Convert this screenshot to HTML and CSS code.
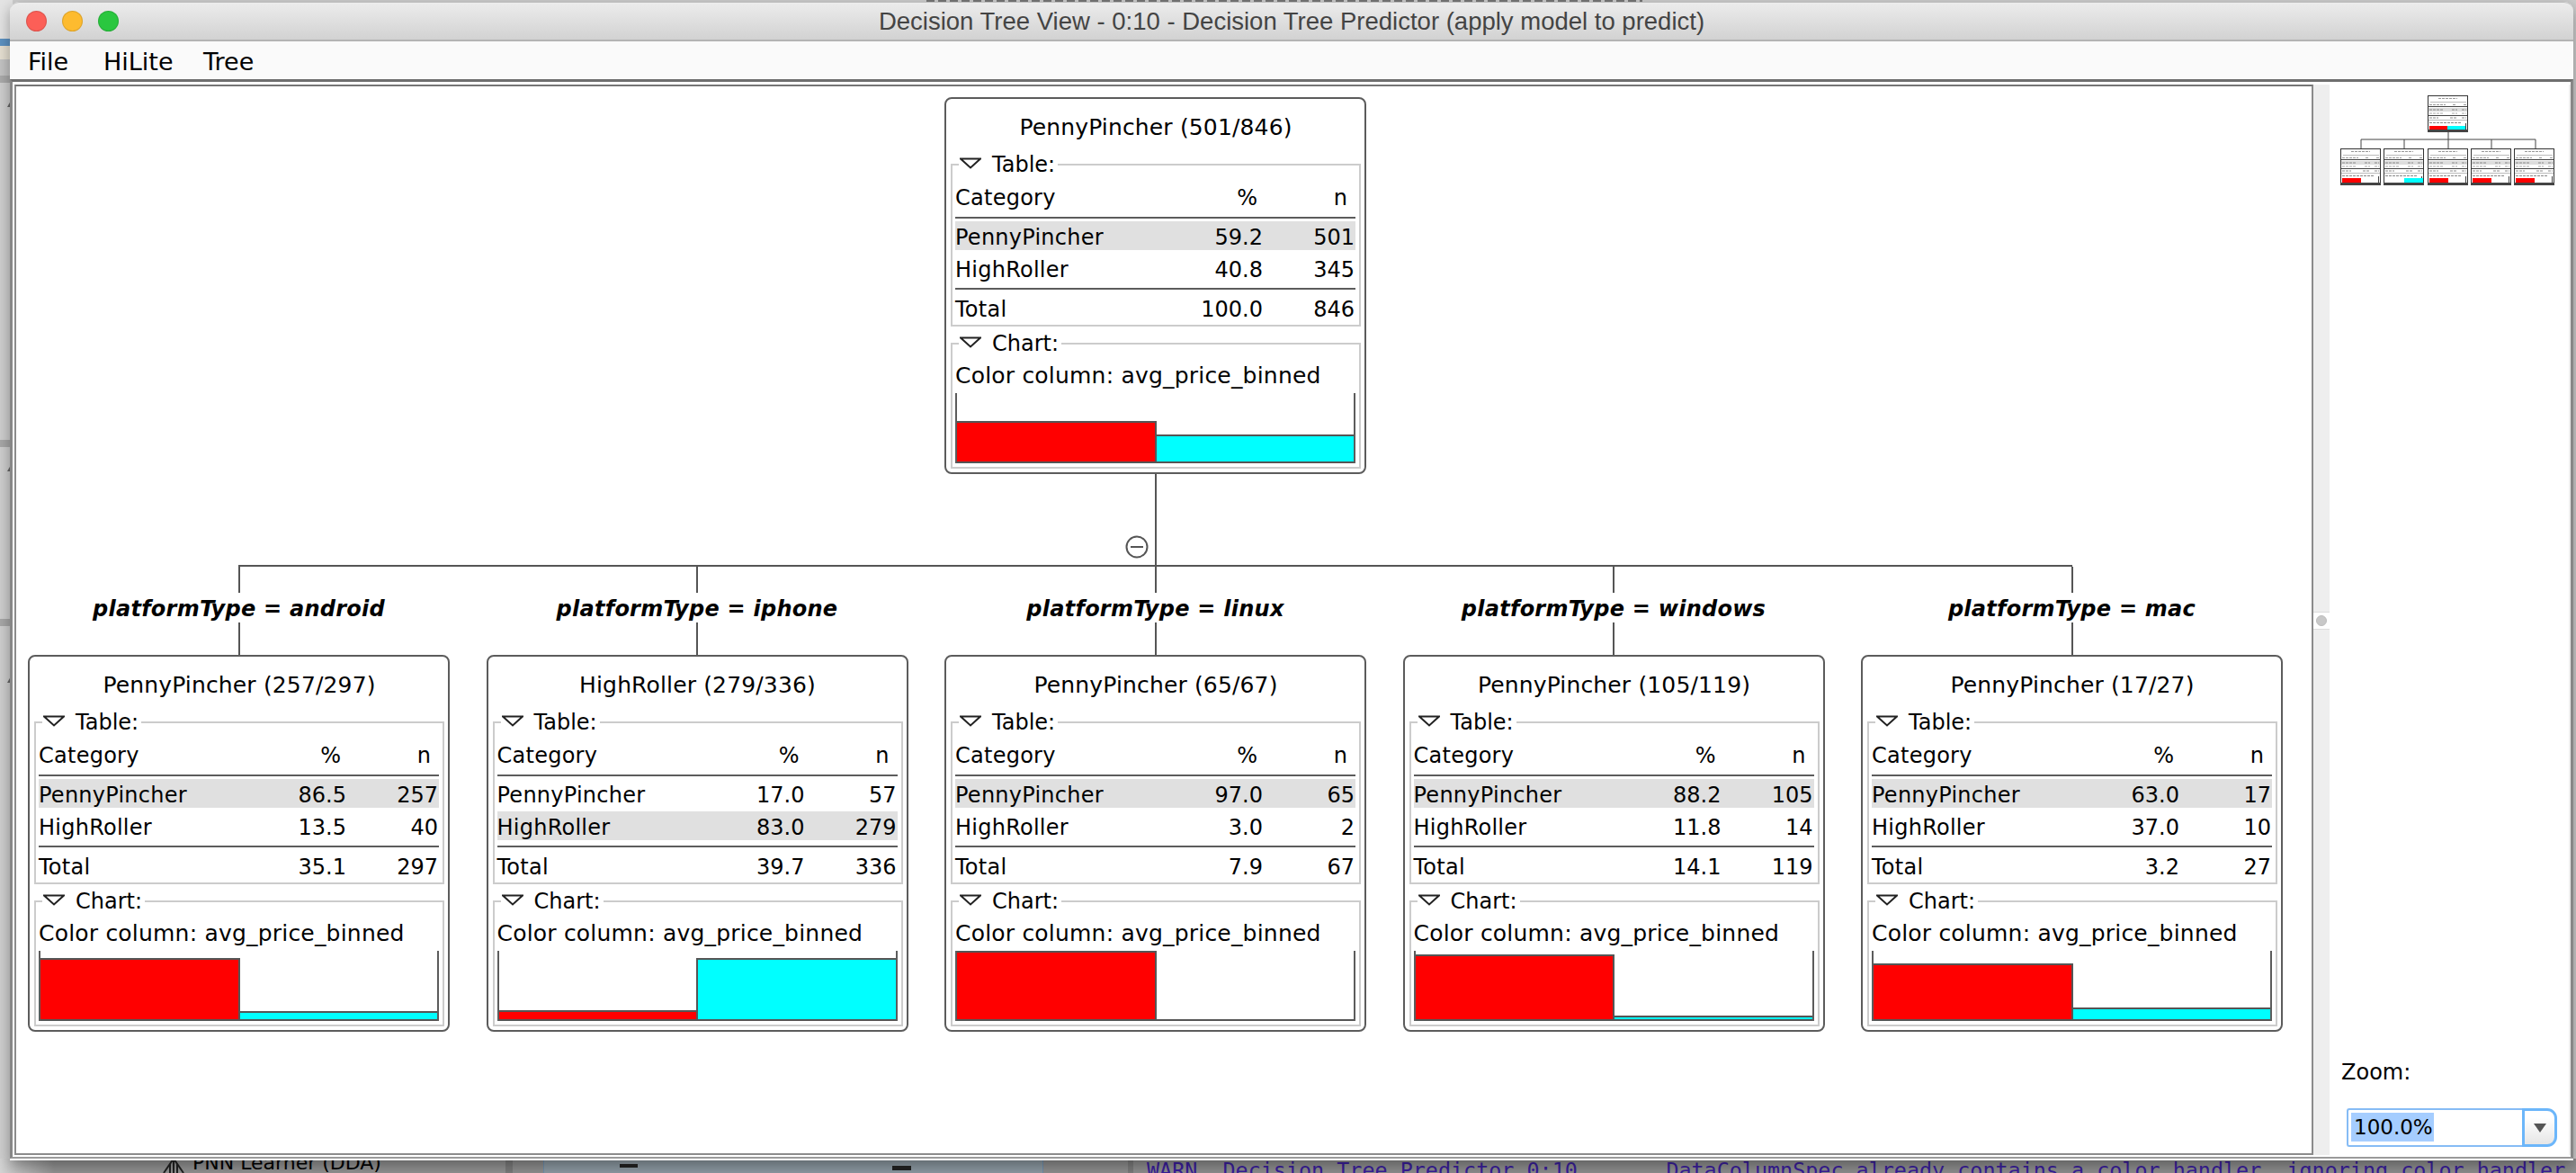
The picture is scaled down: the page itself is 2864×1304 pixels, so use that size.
FILE: index.html
```html
<!doctype html>
<html lang="en">

<head>
	<meta charset="UTF-8" />
	<meta name="viewport" content="width=device-width, initial-scale=1.0" />
	<title>Decision Tree View</title>
	<link rel="stylesheet" href="styles.css">
</head>

<body>
	<!-- what shows of the desktop behind the window -->
	<div class="top-strip"></div>
	<div class="left-strip">
		<div class="strip-tab"></div>
		<div class="strip-blue"></div>
		<div class="strip-cream"></div>
		<div class="strip-tab strip-tab-short"></div>
		<div class="strip-panel strip-panel-one"></div>
		<div class="strip-panel strip-panel-two"></div>
		<div class="strip-panel strip-panel-three"></div>
	</div>
	<div class="bottom-strip">
		<div class="bottom-repo">
			<svg class="repo-icon" width="30" height="16" viewBox="0 0 30 16">
				<path d="M15 0V16M15 0L4 16M15 0L26 16M11 6V16M19 6V16" fill="none" stroke="#222" stroke-width="2" />
			</svg>
			<span class="repo-label">PNN Learner (DDA)</span>
		</div>
		<div class="bottom-sep"></div>
		<div class="bottom-editor">
			<span class="editor-mark editor-mark-one"></span>
			<span class="editor-mark editor-mark-two"></span>
		</div>
		<div class="bottom-sep bottom-sep-wide"></div>
		<div class="bottom-console">WARN  Decision Tree Predictor 0:10       DataColumnSpec already contains a color handler, ignoring color handler</div>
	</div>

	<div class="window">
		<div class="titlebar">
			<div class="lights">
				<span class="light light-red"></span>
				<span class="light light-amber"></span>
				<span class="light light-green"></span>
			</div>
			<div class="window-title">Decision Tree View - 0:10 - Decision Tree Predictor (apply model to predict)</div>
		</div>

		<div class="menubar">
			<span class="menu-item">File</span>
			<span class="menu-item">HiLite</span>
			<span class="menu-item">Tree</span>
		</div>

		<div class="main">
			<div class="canvas">
				<div class="tree">
					<div class="root">
						<div class="node">
							<div class="node-title">PennyPincher (501/846)</div>
							<fieldset class="group group-table">
								<legend class="group-legend"><svg class="caret" width="24" height="13" viewBox="0 0 24 13"><path d="M1 1.5H23L12 11.5Z" fill="#fff" stroke="#222" stroke-width="2" /></svg>Table:</legend>
								<div class="row row-head"><span>Category</span><span>%</span><span>n</span></div>
								<div class="row row-on"><span>PennyPincher</span><span>59.2</span><span>501</span></div>
								<div class="row"><span>HighRoller</span><span>40.8</span><span>345</span></div>
								<div class="row row-total"><span>Total</span><span>100.0</span><span>846</span></div>
							</fieldset>
							<fieldset class="group group-chart">
								<legend class="group-legend"><svg class="caret" width="24" height="13" viewBox="0 0 24 13"><path d="M1 1.5H23L12 11.5Z" fill="#fff" stroke="#222" stroke-width="2" /></svg>Chart:</legend>
								<div class="color-col">Color column: avg_price_binned</div>
								<div class="chart">
									<div class="bar-slot"><div class="bar bar-red" style="height: 47px"></div></div>
									<div class="bar-slot"><div class="bar bar-cyan" style="height: 32px"></div></div>
								</div>
							</fieldset>
						</div>
						<div class="stem">
							<svg class="collapse" width="26" height="26" viewBox="0 0 26 26"><circle cx="13" cy="13" r="11.5" fill="#fff" stroke="#555" stroke-width="2" /><path d="M6 13H20" stroke="#555" stroke-width="2" /></svg>
						</div>
					</div>
					<div class="bus"></div>
					<div class="branches">

						<div class="branch">
							<div class="stub stub-top"></div>
							<div class="rule">platformType = android</div>
							<div class="stub stub-bottom"></div>
							<div class="node">
								<div class="node-title">PennyPincher (257/297)</div>
								<fieldset class="group group-table">
									<legend class="group-legend"><svg class="caret" width="24" height="13" viewBox="0 0 24 13"><path d="M1 1.5H23L12 11.5Z" fill="#fff" stroke="#222" stroke-width="2" /></svg>Table:</legend>
									<div class="row row-head"><span>Category</span><span>%</span><span>n</span></div>
									<div class="row row-on"><span>PennyPincher</span><span>86.5</span><span>257</span></div>
									<div class="row"><span>HighRoller</span><span>13.5</span><span>40</span></div>
									<div class="row row-total"><span>Total</span><span>35.1</span><span>297</span></div>
								</fieldset>
								<fieldset class="group group-chart">
									<legend class="group-legend"><svg class="caret" width="24" height="13" viewBox="0 0 24 13"><path d="M1 1.5H23L12 11.5Z" fill="#fff" stroke="#222" stroke-width="2" /></svg>Chart:</legend>
									<div class="color-col">Color column: avg_price_binned</div>
									<div class="chart">
										<div class="bar-slot"><div class="bar bar-red" style="height: 70px"></div></div>
										<div class="bar-slot"><div class="bar bar-cyan" style="height: 11px"></div></div>
									</div>
								</fieldset>
							</div>
						</div>

						<div class="branch">
							<div class="stub stub-top"></div>
							<div class="rule">platformType = iphone</div>
							<div class="stub stub-bottom"></div>
							<div class="node">
								<div class="node-title">HighRoller (279/336)</div>
								<fieldset class="group group-table">
									<legend class="group-legend"><svg class="caret" width="24" height="13" viewBox="0 0 24 13"><path d="M1 1.5H23L12 11.5Z" fill="#fff" stroke="#222" stroke-width="2" /></svg>Table:</legend>
									<div class="row row-head"><span>Category</span><span>%</span><span>n</span></div>
									<div class="row"><span>PennyPincher</span><span>17.0</span><span>57</span></div>
									<div class="row row-on"><span>HighRoller</span><span>83.0</span><span>279</span></div>
									<div class="row row-total"><span>Total</span><span>39.7</span><span>336</span></div>
								</fieldset>
								<fieldset class="group group-chart">
									<legend class="group-legend"><svg class="caret" width="24" height="13" viewBox="0 0 24 13"><path d="M1 1.5H23L12 11.5Z" fill="#fff" stroke="#222" stroke-width="2" /></svg>Chart:</legend>
									<div class="color-col">Color column: avg_price_binned</div>
									<div class="chart">
										<div class="bar-slot"><div class="bar bar-red" style="height: 12px"></div></div>
										<div class="bar-slot"><div class="bar bar-cyan" style="height: 70px"></div></div>
									</div>
								</fieldset>
							</div>
						</div>

						<div class="branch">
							<div class="stub stub-top"></div>
							<div class="rule">platformType = linux</div>
							<div class="stub stub-bottom"></div>
							<div class="node">
								<div class="node-title">PennyPincher (65/67)</div>
								<fieldset class="group group-table">
									<legend class="group-legend"><svg class="caret" width="24" height="13" viewBox="0 0 24 13"><path d="M1 1.5H23L12 11.5Z" fill="#fff" stroke="#222" stroke-width="2" /></svg>Table:</legend>
									<div class="row row-head"><span>Category</span><span>%</span><span>n</span></div>
									<div class="row row-on"><span>PennyPincher</span><span>97.0</span><span>65</span></div>
									<div class="row"><span>HighRoller</span><span>3.0</span><span>2</span></div>
									<div class="row row-total"><span>Total</span><span>7.9</span><span>67</span></div>
								</fieldset>
								<fieldset class="group group-chart">
									<legend class="group-legend"><svg class="caret" width="24" height="13" viewBox="0 0 24 13"><path d="M1 1.5H23L12 11.5Z" fill="#fff" stroke="#222" stroke-width="2" /></svg>Chart:</legend>
									<div class="color-col">Color column: avg_price_binned</div>
									<div class="chart">
										<div class="bar-slot"><div class="bar bar-red" style="height: 78px"></div></div>
										<div class="bar-slot"><div class="bar bar-white" style="height: 2px"></div></div>
									</div>
								</fieldset>
							</div>
						</div>

						<div class="branch">
							<div class="stub stub-top"></div>
							<div class="rule">platformType = windows</div>
							<div class="stub stub-bottom"></div>
							<div class="node">
								<div class="node-title">PennyPincher (105/119)</div>
								<fieldset class="group group-table">
									<legend class="group-legend"><svg class="caret" width="24" height="13" viewBox="0 0 24 13"><path d="M1 1.5H23L12 11.5Z" fill="#fff" stroke="#222" stroke-width="2" /></svg>Table:</legend>
									<div class="row row-head"><span>Category</span><span>%</span><span>n</span></div>
									<div class="row row-on"><span>PennyPincher</span><span>88.2</span><span>105</span></div>
									<div class="row"><span>HighRoller</span><span>11.8</span><span>14</span></div>
									<div class="row row-total"><span>Total</span><span>14.1</span><span>119</span></div>
								</fieldset>
								<fieldset class="group group-chart">
									<legend class="group-legend"><svg class="caret" width="24" height="13" viewBox="0 0 24 13"><path d="M1 1.5H23L12 11.5Z" fill="#fff" stroke="#222" stroke-width="2" /></svg>Chart:</legend>
									<div class="color-col">Color column: avg_price_binned</div>
									<div class="chart">
										<div class="bar-slot"><div class="bar bar-red" style="height: 74px"></div></div>
										<div class="bar-slot"><div class="bar bar-cyan" style="height: 6px"></div></div>
									</div>
								</fieldset>
							</div>
						</div>

						<div class="branch">
							<div class="stub stub-top"></div>
							<div class="rule">platformType = mac</div>
							<div class="stub stub-bottom"></div>
							<div class="node">
								<div class="node-title">PennyPincher (17/27)</div>
								<fieldset class="group group-table">
									<legend class="group-legend"><svg class="caret" width="24" height="13" viewBox="0 0 24 13"><path d="M1 1.5H23L12 11.5Z" fill="#fff" stroke="#222" stroke-width="2" /></svg>Table:</legend>
									<div class="row row-head"><span>Category</span><span>%</span><span>n</span></div>
									<div class="row row-on"><span>PennyPincher</span><span>63.0</span><span>17</span></div>
									<div class="row"><span>HighRoller</span><span>37.0</span><span>10</span></div>
									<div class="row row-total"><span>Total</span><span>3.2</span><span>27</span></div>
								</fieldset>
								<fieldset class="group group-chart">
									<legend class="group-legend"><svg class="caret" width="24" height="13" viewBox="0 0 24 13"><path d="M1 1.5H23L12 11.5Z" fill="#fff" stroke="#222" stroke-width="2" /></svg>Chart:</legend>
									<div class="color-col">Color column: avg_price_binned</div>
									<div class="chart">
										<div class="bar-slot"><div class="bar bar-red" style="height: 64px"></div></div>
										<div class="bar-slot"><div class="bar bar-cyan" style="height: 15px"></div></div>
									</div>
								</fieldset>
							</div>
						</div>

					</div>
				</div>
			</div>

			<div class="split">
				<div class="split-handle"><span class="split-knob"></span></div>
			</div>

			<div class="side">
				<svg class="minimap" width="266" height="120" viewBox="0 0 266 120">
					<defs>
						<g id="mini-node">
							<rect x="0.5" y="0.5" width="44" height="40" fill="#fff" stroke="#333" />
							<path d="M12 3.5H33" stroke="#999" stroke-dasharray="3 1" />
							<path d="M3 7.5H43" stroke="#bbb" />
							<path d="M2 10.5H20M28 10.5H31M40 10.5H43" stroke="#999" stroke-dasharray="3 1" />
							<path d="M1 12.5H44" stroke="#444" />
							<rect x="1" y="14" width="43" height="4" fill="#ddd" />
							<path d="M2 16H18M27 16H33M38 16H43" stroke="#888" stroke-dasharray="3 1" />
							<path d="M2 20H18M27 20H33M38 20H43" stroke="#aaa" stroke-dasharray="3 1" />
							<path d="M1 22.5H44" stroke="#444" />
							<path d="M2 25H12M25 25H33M38 25H43" stroke="#888" stroke-dasharray="3 1" />
							<path d="M1 27.5H44" stroke="#bbb" />
							<path d="M2 30.5H38" stroke="#888" stroke-dasharray="3 1" />
							<path d="M42.5 31V38" stroke="#444" />
							<rect x="0" y="38" width="45" height="3" fill="#444" />
						</g>
					</defs>
					<path d="M132 53V61M35 61H229M35 61V71M83 61V71M132 61V71M180 61V71M229 61V71" fill="none" stroke="#444" />
					<use href="#mini-node" x="109" y="12" />
					<rect x="111" y="46" width="20" height="4" fill="#f00" />
					<rect x="131" y="46" width="20" height="4" fill="#0ff" />
					<use href="#mini-node" x="12" y="71" />
					<rect x="14" y="104" width="21" height="5" fill="#f00" />
					<use href="#mini-node" x="60" y="71" />
					<rect x="83" y="104" width="21" height="5" fill="#0ff" />
					<use href="#mini-node" x="109" y="71" />
					<rect x="111" y="104" width="21" height="5" fill="#f00" />
					<use href="#mini-node" x="157" y="71" />
					<rect x="159" y="104" width="21" height="5" fill="#f00" />
					<use href="#mini-node" x="205" y="71" />
					<rect x="207" y="104" width="21" height="5" fill="#f00" />
				</svg>
				<div class="zoom-label">Zoom:</div>
				<div class="combo">
					<div class="combo-field"><span class="combo-value">100.0%</span></div>
					<div class="combo-button"><span class="combo-arrow"></span></div>
				</div>
			</div>
		</div>
	</div>
</body>

</html>
```

FILE: styles.css
```css
* {
	box-sizing: border-box;
}

html,
body {
	margin: 0;
	height: 1304px;
	overflow: hidden;
}

body {
	position: relative;
	background: #cdcdcd;
	font-family: "DejaVu Sans", Verdana, sans-serif;
	font-size: 24px;
	color: #000;
}

/* desktop behind the window */
.top-strip {
	position: absolute;
	left: 1030px;
	top: 0;
	width: 796px;
	height: 2px;
	background: repeating-linear-gradient(90deg, #777 0 9px, #ccc 9px 13px);
}

.left-strip {
	position: absolute;
	left: 0;
	top: 0;
	width: 14px;
	height: 1304px;
	display: flex;
	flex-direction: column;
}

.strip-tab {
	height: 43px;
	background: #e4e4e4;
}

.strip-tab-short {
	height: 18px;
	background: #c4c4c4;
	border-bottom: 8px solid #ababab;
	box-sizing: content-box;
}

.strip-blue {
	height: 8px;
	background: #5d92c2;
}

.strip-cream {
	height: 15px;
	background: #e6e0d2;
}

.strip-panel {
	position: relative;
	background: #cfcfcf;
	border-bottom: 8px solid #a8a8a8;
}

.strip-panel::after {
	content: "";
	position: absolute;
	left: 8px;
	top: 20px;
	border-left: 4px solid transparent;
	border-bottom: 7px solid #666;
}

.strip-panel-one {
	height: 405px;
}

.strip-panel-two {
	height: 199px;
}

.strip-panel-three {
	height: 600px;
	border-bottom: none;
}

.strip-panel-three::after {
	top: 56px;
}

.bottom-strip {
	position: absolute;
	left: 0;
	bottom: 0;
	width: 2864px;
	height: 16px;
	display: flex;
	overflow: hidden;
	background: #8f8f8f;
	color: #000;
}

.bottom-repo {
	flex: none;
	display: flex;
	width: 562px;
	padding-left: 178px;
	gap: 6px;
	background: linear-gradient(90deg, #d4d4d4, #939393 60px);
}

.repo-icon {
	flex: none;
}

.repo-label {
	font-family: "DejaVu Sans", sans-serif;
	font-size: 22px;
	line-height: 22px;
	margin-top: -6px;
	white-space: nowrap;
}

.bottom-sep {
	flex: none;
	width: 8px;
	background: #7c7c7c;
}

.bottom-sep-wide {
	width: 6px;
}

.bottom-editor {
	flex: none;
	position: relative;
	width: 556px;
	margin-left: 34px;
	margin-right: 94px;
	background: #8d9aa3;
	border-left: 1px solid #6f8fae;
	border-right: 1px solid #6f8fae;
}

.editor-mark {
	position: absolute;
	background: #222;
	height: 4px;
}

.editor-mark-one {
	left: 84px;
	top: 6px;
	width: 20px;
}

.editor-mark-two {
	left: 387px;
	top: 8px;
	width: 21px;
	height: 5px;
}

.bottom-console {
	flex: none;
	margin-left: 15px;
	font-family: "DejaVu Sans Mono", "Liberation Mono", monospace;
	font-size: 23.4px;
	line-height: 26px;
	color: #3a1e9c;
	white-space: pre;
}

/* window */
.window {
	position: absolute;
	left: 11px;
	top: 2px;
	width: 2850px;
	height: 1288px;
	display: flex;
	flex-direction: column;
	padding-bottom: 2px;
	background: #fff;
	border-radius: 10px 10px 0 0;
	box-shadow: 0 6px 16px rgba(0, 0, 0, 0.35);
}

.titlebar {
	position: relative;
	flex: none;
	height: 44px;
	border-top: 1px solid #bdbdbd;
	border-bottom: 2px solid #b4b4b4;
	border-radius: 10px 10px 0 0;
	background: linear-gradient(#ececec, #d2d2d2);
}

.lights {
	position: absolute;
	left: 18px;
	top: 9px;
	display: flex;
	gap: 17px;
}

.light {
	width: 23px;
	height: 23px;
	border-radius: 50%;
	border: 1px solid rgba(0, 0, 0, 0.12);
}

.light-red {
	background: #fc5f57;
}

.light-amber {
	background: #fdbb2f;
}

.light-green {
	background: #2ac73f;
}

.window-title {
	font-family: "Liberation Sans", Arial, sans-serif;
	font-size: 27.5px;
	line-height: 41px;
	text-align: center;
	color: #444;
}

.menubar {
	flex: none;
	display: grid;
	grid-template-columns: 84px 111px auto;
	align-items: center;
	height: 42px;
	padding: 2px 0 0 20px;
	background: #fafafa;
	font-size: 27px;
}

.main {
	flex: 1;
	min-height: 0;
	display: flex;
	padding: 3px 0 2px 2px;
	border: 3px solid #878787;
	border-top-color: #6e6e6e;
	border-bottom-width: 2px;
	border-bottom-color: #9a9a9a;
	background: #fff;
}

.canvas {
	width: 2556px;
	padding: 12px 0 0 13px;
	border: 2px solid #8b8b8b;
	border-top-color: #757575;
	background: #fff;
}

.tree {
	width: 2507px;
}

.root {
	display: flex;
	flex-direction: column;
	align-items: center;
}

.stem {
	position: relative;
	width: 2px;
	height: 101px;
	background: #555;
}

.collapse {
	position: absolute;
	left: -33px;
	top: 68px;
}

.bus {
	height: 2px;
	margin: 0 234px;
	background: #555;
}

.branches {
	display: flex;
	justify-content: space-between;
}

.branch {
	display: flex;
	flex-direction: column;
	align-items: center;
}

.stub {
	width: 2px;
	background: #555;
}

.stub-top {
	height: 29px;
}

.stub-bottom {
	height: 36px;
}

.rule {
	height: 33px;
	font-size: 24px;
	line-height: 37px;
	font-weight: bold;
	font-style: italic;
	letter-spacing: 0.25px;
	white-space: nowrap;
}

/* decision tree node */
.node {
	width: 469px;
	height: 419px;
	padding: 0 4px 4px 5px;
	border: 2px solid #5c5c5c;
	border-radius: 8px;
	background: #fff;
}

.node-title {
	height: 59px;
	padding-top: 18px;
	font-size: 25px;
	line-height: 28px;
	letter-spacing: 0.15px;
	text-align: center;
}

.group {
	margin: 0;
	min-width: 0;
	padding: 0 4px 0 3px;
	border: 2px solid #cccccc;
}

.group-table {
	padding-bottom: 3px;
}

.group-chart {
	margin-top: 5px;
	padding-bottom: 4px;
}

.group-legend {
	display: flex;
	align-items: center;
	height: 28px;
	margin-left: 4px;
	padding: 0 3px 0 1px;
	line-height: 30px;
}

.caret {
	flex: none;
	margin: -3px 12px 0 0;
}

.row {
	display: grid;
	grid-template-columns: 1fr 90px 103px;
	height: 32px;
	margin-top: 4px;
	line-height: 36px;
	white-space: nowrap;
}

.row span:nth-child(n + 2) {
	text-align: right;
}

.row span:first-child {
	letter-spacing: 0.25px;
}

.row span:last-child {
	padding-right: 1px;
}

.row-head {
	box-sizing: content-box;
	height: 44px;
	margin-top: 0;
	line-height: 46px;
	border-bottom: 2px solid #5c5c5c;
}

.row-head span:nth-child(2) {
	padding-right: 6px;
}

.row-head span:last-child {
	padding-right: 9px;
}

.row-head + .row {
	margin-top: 3px;
}

.row-on {
	background: #e0e0e0;
}

.row-total {
	position: relative;
	margin-top: 12px;
}

.row-total::before {
	content: "";
	position: absolute;
	left: 0;
	right: 0;
	top: -6px;
	height: 2px;
	background: #5c5c5c;
}

.color-col {
	height: 41px;
	font-size: 25px;
	letter-spacing: 0.2px;
	line-height: 44px;
	white-space: nowrap;
}

.chart {
	display: flex;
	align-items: flex-end;
	width: 445px;
	height: 78px;
	border-left: 2px solid #5c5c5c;
	border-right: 2px solid #5c5c5c;
}

.bar-slot {
	flex: 1;
	display: flex;
	flex-direction: column;
	justify-content: flex-end;
}

.bar {
	border: 2px solid #555;
	border-left: none;
	margin-right: -1px;
}

.bar-slot:last-child .bar {
	border-left: 2px solid #555;
	margin-right: 0;
	margin-left: -1px;
	border-right: none;
}

.bar-red {
	background: #ff0000;
}

.bar-cyan {
	background: #00ffff;
}

.bar-white {
	background: #fff;
	border-top: none;
}

/* divider and side panel */
.split {
	flex: none;
	position: relative;
	width: 18px;
	background: #eeeeee;
}

.split-handle {
	position: absolute;
	left: 0;
	right: 0;
	top: 586px;
	height: 20px;
	display: flex;
	align-items: center;
	justify-content: center;
	background: #fff;
	border-top: 1px solid #dddddd;
	border-bottom: 1px solid #dddddd;
}

.split-knob {
	width: 12px;
	height: 12px;
	border-radius: 50%;
	background: #c8c8c8;
	border: 1px solid #bdbdbd;
}

.side {
	flex: 1;
	display: flex;
	flex-direction: column;
	align-items: flex-start;
	padding: 0 0 9px 13px;
	border-right: 2px solid #eeeeee;
	background: #fff;
}

.minimap {
	margin-left: -13px;
	flex: none;
}

.zoom-label {
	margin-top: auto;
	height: 28px;
	line-height: 28px;
}

.combo {
	display: flex;
	margin: 26px 0 0 6px;
	width: 234px;
	height: 43px;
}

.combo-field {
	flex: 1;
	padding: 3px 0 0 3px;
	border: 2px solid #86bcf5;
	border-right: none;
	border-radius: 3px 0 0 3px;
	background: #fff;
}

.combo-value {
	display: block;
	width: 92px;
	height: 32px;
	padding-left: 3px;
	font-size: 23px;
	line-height: 32px;
	background: #a5cdff;
}

.combo-button {
	display: flex;
	align-items: center;
	justify-content: center;
	width: 39px;
	border: 3px solid #6cb6fa;
	border-radius: 0 11px 11px 0;
	background: linear-gradient(#ffffff 20%, #e6e6e6);
}

.combo-arrow {
	width: 0;
	height: 0;
	border-left: 7px solid transparent;
	border-right: 7px solid transparent;
	border-top: 10px solid #555;
}
```
